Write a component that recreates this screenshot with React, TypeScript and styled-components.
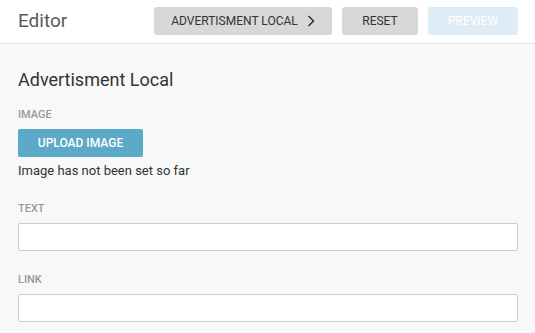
import React from 'react';
import styled, { createGlobalStyle } from 'styled-components';

const GlobalStyle = createGlobalStyle`
  html, body {
    margin: 0;
    padding: 0;
    background: #f8f8f8;
    font-family: Roboto, "Liberation Sans", Arial, sans-serif;
  }
`;

const Page = styled.div`
  width: 535px;
  min-height: 333px;
  background: #f8f8f8;
`;

const Header = styled.header`
  height: 43px;
  background: #ffffff;
  border-bottom: 1px solid #e3e3e3;
  display: flex;
  align-items: center;
  padding: 0 17px 0 18px;
`;

const Title = styled.h1`
  flex: 1;
  margin: 0;
  font-size: 19px;
  font-weight: 400;
  color: #5a5a5a;
  margin-top: -2px;
`;

const Actions = styled.div`
  display: flex;
  gap: 10px;
  margin-top: -1px;
`;

const HeaderButton = styled.button<{ $width: number; $disabled?: boolean }>`
  width: ${(p) => p.$width}px;
  height: 28px;
  border: none;
  border-radius: 3px;
  background: ${(p) => (p.$disabled ? '#deedf5' : '#d8d8d8')};
  color: ${(p) => (p.$disabled ? '#ffffff' : '#333333')};
  font-family: inherit;
  font-size: 12px;
  font-weight: 400;
  text-transform: uppercase;
  display: flex;
  align-items: center;
  justify-content: center;
  gap: 9px;
  padding: 0;
  cursor: pointer;
`;

const Content = styled.main`
  padding: 24px 17px 0 18px;
  display: flex;
  flex-direction: column;
`;

const Heading = styled.h2`
  margin: 0 0 16px;
  font-size: 18px;
  font-weight: 400;
  color: #333333;
  line-height: 24px;
`;

const Label = styled.div`
  font-size: 11px;
  font-weight: 500;
  color: #999999;
  line-height: 14px;
  margin-bottom: 7px;
`;

const UploadButton = styled.button`
  width: 125px;
  height: 28px;
  border: none;
  border-radius: 2px;
  background: #5ca9c8;
  color: #ffffff;
  font-family: inherit;
  font-size: 12px;
  font-weight: 500;
  text-transform: uppercase;
  padding: 0;
  cursor: pointer;
`;

const Hint = styled.div`
  font-size: 13px;
  color: #333333;
  margin-top: 6px;
  line-height: 16px;
  margin-bottom: 23px;
`;

const Field = styled.div`
  display: flex;
  flex-direction: column;
  margin-bottom: 22px;
`;

const Input = styled.input`
  height: 28px;
  box-sizing: border-box;
  border: 1px solid #cccccc;
  border-radius: 2px;
  background: #ffffff;
  font-family: inherit;
  font-size: 13px;
  padding: 0 8px;
  outline: none;
`;

const Chevron = () => (
  <svg width="8" height="12" viewBox="0 0 8 12">
    <path d="M1.5 1 L6.5 6 L1.5 11" fill="none" stroke="#333" strokeWidth="1.6" />
  </svg>
);

export default function App() {
  return (
    <>
      <GlobalStyle />
      <Page>
        <Header>
          <Title>Editor</Title>
          <Actions>
            <HeaderButton $width={178}>
              Advertisment Local
              <Chevron />
            </HeaderButton>
            <HeaderButton $width={76}>Reset</HeaderButton>
            <HeaderButton $width={90} $disabled>
              Preview
            </HeaderButton>
          </Actions>
        </Header>
        <Content>
          <Heading>Advertisment Local</Heading>
          <Label>IMAGE</Label>
          <div>
            <UploadButton>Upload Image</UploadButton>
          </div>
          <Hint>Image has not been set so far</Hint>
          <Field>
            <Label>TEXT</Label>
            <Input type="text" />
          </Field>
          <Field>
            <Label>LINK</Label>
            <Input type="text" />
          </Field>
        </Content>
      </Page>
    </>
  );
}
